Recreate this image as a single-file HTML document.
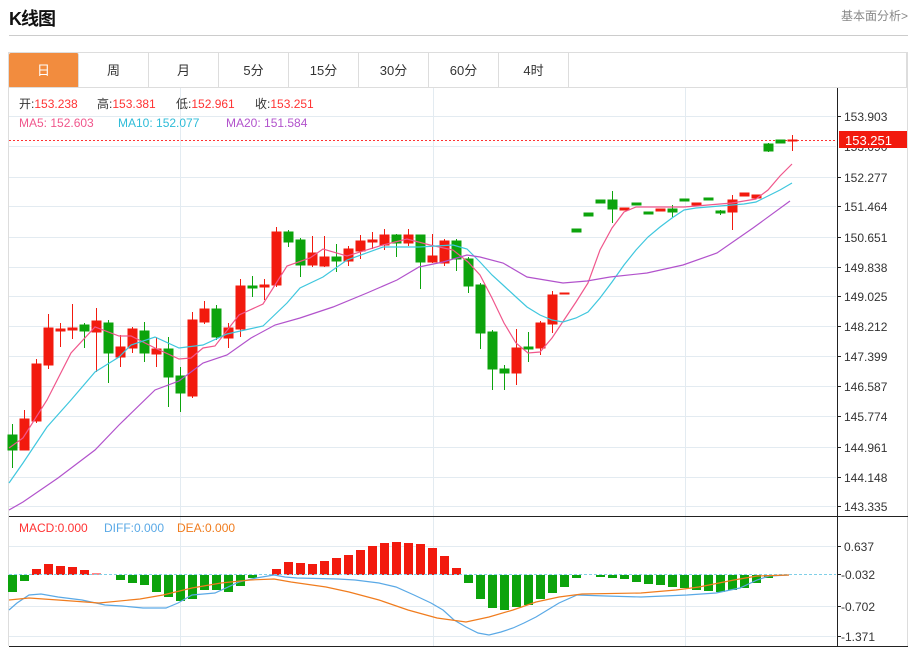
<!DOCTYPE html>
<html><head><meta charset="utf-8"><style>
body{margin:0;width:913px;height:650px;background:#fff;font-family:"Liberation Sans","Noto Sans CJK SC",sans-serif;overflow:hidden;position:relative}
.t{position:absolute;left:9px;top:5px;font-size:18px;font-weight:bold;color:#111;letter-spacing:-1px}
.r{position:absolute;right:5px;top:7px;font-size:12px;color:#888}
.hl{position:absolute;left:9px;top:35px;width:899px;height:1px;background:#ccc}
.tabs{position:absolute;left:8px;top:52px;width:899px;height:35px;border:1px solid #ddd;border-bottom:none;box-sizing:border-box}
.tab{position:absolute;top:0;width:70px;height:35px;line-height:35px;text-align:center;font-size:13px;color:#333;border-right:1px solid #ddd;box-sizing:border-box}
.on{background:#f28c3e;color:#fff;border-radius:2px}
svg{position:absolute;left:0;top:0}
</style></head><body>
<div class="t">K线图</div><div class="r">基本面分析&gt;</div><div class="hl"></div>
<div class="tabs">
<div class="tab on" style="left:0">日</div><div class="tab" style="left:70px">周</div><div class="tab" style="left:140px">月</div><div class="tab" style="left:210px">5分</div><div class="tab" style="left:280px">15分</div><div class="tab" style="left:350px">30分</div><div class="tab" style="left:420px">60分</div><div class="tab" style="left:490px">4时</div>
</div>
<svg width="913" height="650" xmlns="http://www.w3.org/2000/svg" font-family="Liberation Sans, Noto Sans CJK SC, sans-serif">
<line x1="8.5" y1="87" x2="8.5" y2="646" stroke="#ddd"/>
<line x1="907.5" y1="52" x2="907.5" y2="646" stroke="#ddd"/>
<line x1="8" y1="87.5" x2="908" y2="87.5" stroke="#ddd"/>
<g stroke="#e3ebf1" stroke-width="1">
<line x1="9" y1="116.5" x2="836" y2="116.5"/><line x1="9" y1="146.5" x2="836" y2="146.5"/><line x1="9" y1="177.5" x2="836" y2="177.5"/><line x1="9" y1="206.5" x2="836" y2="206.5"/><line x1="9" y1="237.5" x2="836" y2="237.5"/><line x1="9" y1="267.5" x2="836" y2="267.5"/><line x1="9" y1="296.5" x2="836" y2="296.5"/><line x1="9" y1="326.5" x2="836" y2="326.5"/><line x1="9" y1="356.5" x2="836" y2="356.5"/><line x1="9" y1="386.5" x2="836" y2="386.5"/><line x1="9" y1="416.5" x2="836" y2="416.5"/><line x1="9" y1="447.5" x2="836" y2="447.5"/><line x1="9" y1="477.5" x2="836" y2="477.5"/><line x1="9" y1="506.5" x2="836" y2="506.5"/>
<line x1="9" y1="546.5" x2="836" y2="546.5"/><line x1="9" y1="606.5" x2="836" y2="606.5"/><line x1="9" y1="636.5" x2="836" y2="636.5"/>
<line x1="180.5" y1="88" x2="180.5" y2="646"/><line x1="433.5" y1="88" x2="433.5" y2="646"/><line x1="685.5" y1="88" x2="685.5" y2="646"/>
</g>
<line x1="9" y1="140.5" x2="836" y2="140.5" stroke="#f33" stroke-dasharray="2,2"/>
<g stroke-width="1">
<g stroke="#0ca30c" fill="#0ca30c">
<line x1="12.5" y1="424" x2="12.5" y2="468"/><rect x="8" y="435" width="9" height="15"/>
<line x1="84.5" y1="323" x2="84.5" y2="348"/><rect x="80" y="325" width="9" height="6"/>
<line x1="108.5" y1="320" x2="108.5" y2="383"/><rect x="104" y="323" width="9" height="30"/>
<line x1="144.5" y1="322" x2="144.5" y2="362"/><rect x="140" y="331" width="9" height="22"/>
<line x1="168.5" y1="337" x2="168.5" y2="407"/><rect x="164" y="349" width="9" height="28"/>
<line x1="180.5" y1="367" x2="180.5" y2="412"/><rect x="176" y="376" width="9" height="17"/>
<line x1="216.5" y1="305" x2="216.5" y2="340"/><rect x="212" y="309" width="9" height="28"/>
<line x1="252.5" y1="276" x2="252.5" y2="297"/><rect x="248" y="286" width="9" height="2"/>
<line x1="288.5" y1="230" x2="288.5" y2="247"/><rect x="284" y="232" width="9" height="10"/>
<line x1="300.5" y1="238" x2="300.5" y2="277"/><rect x="296" y="240" width="9" height="25"/>
<line x1="336.5" y1="244" x2="336.5" y2="272"/><rect x="332" y="257" width="9" height="4"/>
<line x1="396.5" y1="234" x2="396.5" y2="257"/><rect x="392" y="235" width="9" height="8"/>
<line x1="420.5" y1="235" x2="420.5" y2="289"/><rect x="416" y="235" width="9" height="27"/>
<line x1="456.5" y1="239" x2="456.5" y2="271"/><rect x="452" y="241" width="9" height="18"/>
<line x1="468.5" y1="257" x2="468.5" y2="293"/><rect x="464" y="259" width="9" height="27"/>
<line x1="480.5" y1="283" x2="480.5" y2="349"/><rect x="476" y="285" width="9" height="48"/>
<line x1="492.5" y1="330" x2="492.5" y2="390"/><rect x="488" y="332" width="9" height="37"/>
<line x1="504.5" y1="365" x2="504.5" y2="390"/><rect x="500" y="369" width="9" height="4"/>
<line x1="528.5" y1="332" x2="528.5" y2="362"/><rect x="524" y="347" width="9" height="2"/>
<rect x="572" y="229" width="9" height="3"/>
<rect x="584" y="213" width="9" height="3"/>
<rect x="596" y="200" width="9" height="3"/>
<line x1="612.5" y1="191" x2="612.5" y2="223"/><rect x="608" y="200" width="9" height="9"/>
<rect x="632" y="203" width="9" height="2"/>
<rect x="644" y="212" width="9" height="2"/>
<line x1="672.5" y1="205" x2="672.5" y2="217"/><rect x="668" y="209" width="9" height="3"/>
<rect x="680" y="199" width="9" height="2"/>
<rect x="704" y="198" width="9" height="2"/>
<line x1="720.5" y1="210" x2="720.5" y2="215"/><rect x="716" y="211" width="9" height="2"/>
<line x1="768.5" y1="143" x2="768.5" y2="152"/><rect x="764" y="144" width="9" height="7"/>
<rect x="776" y="140" width="9" height="3"/>
</g>
<g stroke="#f21a0e" fill="#f21a0e">
<line x1="24.5" y1="410" x2="24.5" y2="450"/><rect x="20" y="419" width="9" height="31"/>
<line x1="36.5" y1="359" x2="36.5" y2="423"/><rect x="32" y="364" width="9" height="57"/>
<line x1="48.5" y1="314" x2="48.5" y2="369"/><rect x="44" y="328" width="9" height="37"/>
<line x1="60.5" y1="323" x2="60.5" y2="347"/><rect x="56" y="329" width="9" height="2"/>
<line x1="72.5" y1="304" x2="72.5" y2="339"/><rect x="68" y="328" width="9" height="2"/>
<line x1="96.5" y1="308" x2="96.5" y2="372"/><rect x="92" y="321" width="9" height="11"/>
<line x1="120.5" y1="335" x2="120.5" y2="367"/><rect x="116" y="347" width="9" height="10"/>
<line x1="132.5" y1="327" x2="132.5" y2="353"/><rect x="128" y="329" width="9" height="19"/>
<line x1="156.5" y1="337" x2="156.5" y2="367"/><rect x="152" y="349" width="9" height="5"/>
<line x1="192.5" y1="312" x2="192.5" y2="398"/><rect x="188" y="320" width="9" height="76"/>
<line x1="204.5" y1="301" x2="204.5" y2="324"/><rect x="200" y="309" width="9" height="13"/>
<line x1="228.5" y1="323" x2="228.5" y2="348"/><rect x="224" y="328" width="9" height="10"/>
<line x1="240.5" y1="279" x2="240.5" y2="337"/><rect x="236" y="286" width="9" height="43"/>
<line x1="264.5" y1="279" x2="264.5" y2="300"/><rect x="260" y="285" width="9" height="2"/>
<line x1="276.5" y1="227" x2="276.5" y2="287"/><rect x="272" y="232" width="9" height="53"/>
<line x1="312.5" y1="236" x2="312.5" y2="267"/><rect x="308" y="253" width="9" height="12"/>
<line x1="324.5" y1="236" x2="324.5" y2="267"/><rect x="320" y="257" width="9" height="9"/>
<line x1="348.5" y1="246" x2="348.5" y2="266"/><rect x="344" y="249" width="9" height="12"/>
<line x1="360.5" y1="235" x2="360.5" y2="259"/><rect x="356" y="241" width="9" height="10"/>
<line x1="372.5" y1="232" x2="372.5" y2="249"/><rect x="368" y="240" width="9" height="2"/>
<line x1="384.5" y1="229" x2="384.5" y2="250"/><rect x="380" y="235" width="9" height="10"/>
<line x1="408.5" y1="229" x2="408.5" y2="246"/><rect x="404" y="235" width="9" height="8"/>
<line x1="432.5" y1="234" x2="432.5" y2="263"/><rect x="428" y="256" width="9" height="6"/>
<line x1="444.5" y1="239" x2="444.5" y2="266"/><rect x="440" y="241" width="9" height="22"/>
<line x1="516.5" y1="329" x2="516.5" y2="385"/><rect x="512" y="348" width="9" height="25"/>
<line x1="540.5" y1="321" x2="540.5" y2="355"/><rect x="536" y="323" width="9" height="25"/>
<line x1="552.5" y1="291" x2="552.5" y2="333"/><rect x="548" y="295" width="9" height="29"/>
<rect x="560" y="293" width="9" height="1"/>
<rect x="620" y="208" width="9" height="2"/>
<rect x="656" y="209" width="9" height="2"/>
<rect x="692" y="203" width="9" height="2"/>
<line x1="732.5" y1="195" x2="732.5" y2="230"/><rect x="728" y="200" width="9" height="12"/>
<rect x="740" y="193" width="9" height="3"/>
<rect x="752" y="195" width="9" height="3"/>
<line x1="792.5" y1="135" x2="792.5" y2="151"/><rect x="788" y="140" width="9" height="1"/>
</g>
</g>
<g fill="none" stroke-width="1.2">
<polyline stroke="#f0578c" points="9,448 23,438 47,400 71,353 95,327 119,336 131,336 155,348 179,359 191,358 203,348 215,346 239,315 263,304 287,266 310,258 323,249 347,256 383,245 407,239 430,245 453,250 468,262 480,275 492,298 504,323 516,343 528,353 540,352 552,338 564,320 576,302 588,283 600,250 612,228 624,212 636,207 660,207 684,207 708,205 732,203 756,199 768,190 780,176 792,164"/>
<polyline stroke="#3fc7de" points="9,483 23,463 47,427 71,400 95,372 119,357 131,345 155,337 179,348 203,345 227,334 263,326 287,303 300,288 323,277 347,260 383,247 419,247 453,245 467,249 480,262 492,275 503,285 516,297 527,307 540,315 552,320 563,322 576,318 588,312 600,298 612,282 624,265 636,250 648,237 660,227 672,218 684,210 696,208 720,206 744,204 756,202 768,196 780,190 792,183"/>
<polyline stroke="#b253cc" points="9,510 23,502 58,478 95,450 119,425 155,390 179,381 203,363 227,355 251,338 275,325 300,318 333,307 367,293 397,280 419,267 443,262 467,255 480,257 503,263 527,277 563,283 587,281 610,277 647,273 683,265 717,253 753,228 790,201"/>
</g>
<g stroke-width="1">
<g fill="#0ca30c">
<rect x="8" y="575" width="9" height="17"/><rect x="20" y="575" width="9" height="6"/>
<rect x="116" y="575" width="9" height="5"/><rect x="128" y="575" width="9" height="8"/><rect x="140" y="575" width="9" height="10"/><rect x="152" y="575" width="9" height="17"/><rect x="164" y="575" width="9" height="22"/><rect x="176" y="575" width="9" height="26"/><rect x="188" y="575" width="9" height="24"/><rect x="200" y="575" width="9" height="15"/><rect x="212" y="575" width="9" height="15"/><rect x="224" y="575" width="9" height="17"/><rect x="236" y="575" width="9" height="11"/><rect x="248" y="575" width="9" height="3"/>
<rect x="464" y="575" width="9" height="8"/><rect x="476" y="575" width="9" height="24"/><rect x="488" y="575" width="9" height="33"/><rect x="500" y="575" width="9" height="35"/><rect x="512" y="575" width="9" height="32"/><rect x="524" y="575" width="9" height="30"/><rect x="536" y="575" width="9" height="24"/><rect x="548" y="575" width="9" height="18"/><rect x="560" y="575" width="9" height="12"/><rect x="572" y="575" width="9" height="3"/>
<rect x="596" y="575" width="9" height="2"/><rect x="608" y="575" width="9" height="3"/><rect x="620" y="575" width="9" height="4"/><rect x="632" y="575" width="9" height="7"/><rect x="644" y="575" width="9" height="9"/><rect x="656" y="575" width="9" height="10"/><rect x="668" y="575" width="9" height="12"/><rect x="680" y="575" width="9" height="13"/><rect x="692" y="575" width="9" height="15"/><rect x="704" y="575" width="9" height="16"/><rect x="716" y="575" width="9" height="17"/><rect x="728" y="575" width="9" height="15"/><rect x="740" y="575" width="9" height="13"/><rect x="752" y="575" width="9" height="8"/><rect x="764" y="575" width="9" height="3"/>
</g>
<g fill="#f21a0e">
<rect x="32" y="569" width="9" height="6"/><rect x="44" y="564" width="9" height="11"/><rect x="56" y="566" width="9" height="9"/><rect x="68" y="567" width="9" height="8"/><rect x="80" y="570" width="9" height="5"/><rect x="92" y="573" width="9" height="2" fill="#f88"/>
<rect x="272" y="569" width="9" height="6"/><rect x="284" y="562" width="9" height="13"/><rect x="296" y="563" width="9" height="12"/><rect x="308" y="564" width="9" height="11"/><rect x="320" y="561" width="9" height="14"/><rect x="332" y="558" width="9" height="17"/><rect x="344" y="555" width="9" height="20"/><rect x="356" y="550" width="9" height="25"/><rect x="368" y="546" width="9" height="29"/><rect x="380" y="543" width="9" height="32"/><rect x="392" y="542" width="9" height="33"/><rect x="404" y="543" width="9" height="32"/><rect x="416" y="544" width="9" height="31"/><rect x="428" y="548" width="9" height="27"/><rect x="440" y="556" width="9" height="19"/><rect x="452" y="568" width="9" height="7"/>
</g>
</g>
<line x1="9" y1="574.5" x2="836" y2="574.5" stroke="#7fd0e8" stroke-dasharray="3,2"/>
<g fill="none" stroke-width="1.2">
<polyline stroke="#5aa9e6" points="9,610 17,603 29,595 41,594 58,597 82,600 105,605 122,606 143,608 166,608 178,603 192,595 215,593 239,582 256,578 274,575 285,577 297,578 338,579 355,580 379,583 396,587 414,595 431,603 443,610 454,620 466,627 478,633 489,635 501,632 513,628 524,623 536,617 559,603 577,595 606,596 641,597 687,595 716,593 740,588 757,580 769,576 789,575"/>
<polyline stroke="#f07c1e" points="9,600 29,598 58,600 99,603 140,599 163,595 192,588 221,583 250,580 274,579 291,582 326,587 349,592 379,600 408,610 437,618 466,622 489,617 513,610 536,602 559,597 582,594 641,593 676,590 699,587 734,580 757,576 789,575"/>
</g>
<line x1="9" y1="516.5" x2="908" y2="516.5" stroke="#222"/>
<line x1="9" y1="646.5" x2="908" y2="646.5" stroke="#222"/>
<line x1="837.5" y1="88" x2="837.5" y2="646" stroke="#222"/>
<g stroke="#222">
<line x1="837" y1="116.5" x2="841" y2="116.5"/><line x1="837" y1="177.5" x2="841" y2="177.5"/><line x1="837" y1="206.5" x2="841" y2="206.5"/><line x1="837" y1="237.5" x2="841" y2="237.5"/><line x1="837" y1="267.5" x2="841" y2="267.5"/><line x1="837" y1="296.5" x2="841" y2="296.5"/><line x1="837" y1="326.5" x2="841" y2="326.5"/><line x1="837" y1="356.5" x2="841" y2="356.5"/><line x1="837" y1="386.5" x2="841" y2="386.5"/><line x1="837" y1="416.5" x2="841" y2="416.5"/><line x1="837" y1="447.5" x2="841" y2="447.5"/><line x1="837" y1="477.5" x2="841" y2="477.5"/><line x1="837" y1="506.5" x2="841" y2="506.5"/>
<line x1="837" y1="546.5" x2="841" y2="546.5"/><line x1="837" y1="574.5" x2="841" y2="574.5"/><line x1="837" y1="606.5" x2="841" y2="606.5"/><line x1="837" y1="636.5" x2="841" y2="636.5"/>
</g>
<g font-size="12" fill="#333">
<text x="844" y="121">153.903</text><text x="844" y="151">153.090</text><text x="844" y="182">152.277</text><text x="844" y="211">151.464</text><text x="844" y="242">150.651</text><text x="844" y="272">149.838</text><text x="844" y="301">149.025</text><text x="844" y="331">148.212</text><text x="844" y="361">147.399</text><text x="844" y="391">146.587</text><text x="844" y="421">145.774</text><text x="844" y="452">144.961</text><text x="844" y="482">144.148</text><text x="844" y="511">143.335</text>
<text x="844" y="551">0.637</text><text x="841" y="579">-0.032</text><text x="841" y="611">-0.702</text><text x="841" y="641">-1.371</text>
</g>
<rect x="839" y="131" width="68" height="17" fill="#f21a0e"/>
<text x="845" y="145" font-size="13" fill="#fff">153.251</text>
<g font-size="12">
<text x="19" y="108" fill="#333">开:<tspan fill="#f33">153.238</tspan></text>
<text x="97" y="108" fill="#333">高:<tspan fill="#f33">153.381</tspan></text>
<text x="176" y="108" fill="#333">低:<tspan fill="#f33">152.961</tspan></text>
<text x="255" y="108" fill="#333">收:<tspan fill="#f33">153.251</tspan></text>
<text x="19" y="127" fill="#f0578c">MA5: 152.603</text>
<text x="118" y="127" fill="#2fbcd8">MA10: 152.077</text>
<text x="226" y="127" fill="#b253cc">MA20: 151.584</text>
<text x="19" y="532" fill="#f33">MACD:0.000</text>
<text x="104" y="532" fill="#5aa9e6">DIFF:0.000</text>
<text x="177" y="532" fill="#f07c1e">DEA:0.000</text>
</g>
</svg>
</body></html>
